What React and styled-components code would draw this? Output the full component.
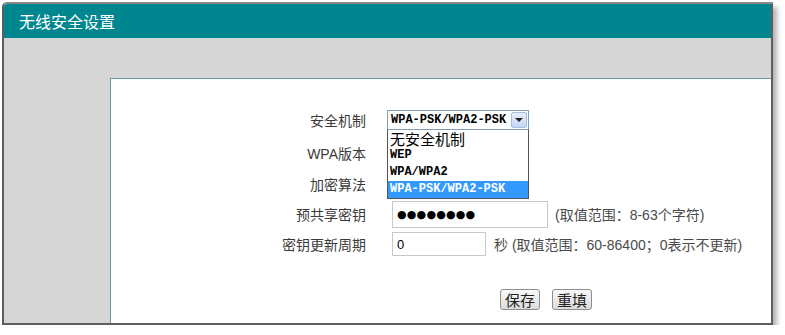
import React from "react";
import styled, { createGlobalStyle } from "styled-components";

const GlobalStyle = createGlobalStyle`
    body {
        margin: 0;
        background: #ffffff;
        font-family: "Liberation Sans", "Noto Sans CJK SC", sans-serif;
    }
`;

const Frame = styled.div`
    margin: 2px 0 0 2px;
    width: 767px;
    height: 319px;
    border: 2px solid #5e5e5e;
    border-top-color: #8a8a8a;
    border-top-left-radius: 5px;
    box-shadow: 4px 5px 5px rgba(0, 0, 0, 0.3);
    display: flex;
    flex-direction: column;
    overflow: hidden;
`;

const Header = styled.div`
    height: 34px;
    flex: none;
    background: #00868f;
    color: #ffffff;
    font-size: 16px;
    display: flex;
    align-items: center;
    padding-left: 15px;
`;

const Body = styled.div`
    flex: 1;
    display: flex;
    background: #d6d6d6;
    padding: 40px 0 0 106px;
`;

const Panel = styled.div`
    flex: 1;
    background: #ffffff;
    border-top: 1px solid #5f9ea2;
    border-left: 1px solid #5f9ea2;
    padding-top: 24px;
`;

const Row = styled.div`
    display: flex;
    align-items: center;
    height: ${(p) => p.h}px;
`;

const Label = styled.div`
    width: 255px;
    flex: none;
    text-align: right;
    font-size: 14px;
    color: #3a3a3a;
`;

const Field = styled.div`
    position: relative;
    display: flex;
    align-items: center;
    margin-left: ${(p) => p.offset || 21}px;
    font-size: 14px;
    color: #4a4a4a;
`;

const Select = styled.div`
    width: 140px;
    height: 18px;
    border: 1px solid #7f9db9;
    display: flex;
    align-items: center;
    font-family: "Liberation Mono", monospace;
    font-weight: bold;
    font-size: 12px;
    color: #000000;
    background: #ffffff;
`;

const SelectText = styled.span`
    flex: 1;
    padding-left: 3px;
`;

const Arrow = styled.span`
    width: 16px;
    height: 16px;
    margin-right: 1px;
    border: 1px solid #a7bede;
    border-radius: 2px;
    background: linear-gradient(#e6eefc, #c5d5f5);
    box-sizing: border-box;
    display: flex;
    align-items: center;
    justify-content: center;

    &::after {
        content: "";
        border-left: 4px solid transparent;
        border-right: 4px solid transparent;
        border-top: 4px solid #222;
    }
`;

const OptionList = styled.div`
    position: absolute;
    top: 19px;
    left: 0;
    width: 140px;
    border: 1px solid #555555;
    border-top-color: #7f9db9;
    background: #ffffff;
    z-index: 2;
`;

const Option = styled.div`
    height: 17px;
    line-height: 17px;
    padding-left: 2px;
    font-family: ${(p) => (p.cjk ? `"Noto Sans CJK SC", sans-serif` : `"Liberation Mono", monospace`)};
    font-weight: ${(p) => (p.cjk ? "normal" : "bold")};
    font-size: ${(p) => (p.cjk ? "15px" : "12px")};
    color: ${(p) => (p.selected ? "#ffffff" : "#000000")};
    background: ${(p) => (p.selected ? "#3399ff" : "transparent")};
`;

const Input = styled.div`
    width: ${(p) => p.w}px;
    height: ${(p) => p.h}px;
    border: 1px solid #c8c8c8;
    box-sizing: border-box;
    display: flex;
    align-items: center;
    padding-left: 4px;
    font-size: 13px;
    color: #000000;
`;

const Dots = styled.span`
    font-family: "DejaVu Sans", sans-serif;
    font-size: 11px;
    letter-spacing: 0.2px;
`;

const Hint = styled.span`
    margin-left: ${(p) => p.gap}px;
    white-space: nowrap;
`;

const Buttons = styled.div`
    display: flex;
    gap: 12px;
    padding: 30px 0 0 389px;
`;

const Button = styled.button`
    height: 21px;
    padding: 0 4px;
    font-family: "Noto Sans CJK SC", sans-serif;
    font-size: 15px;
    color: #222;
    border: 1px solid #8e8e8e;
    border-radius: 3px;
    background: linear-gradient(#f8f8f8, #dcdcdc);
    line-height: 17px;
`;

const options = ["无安全机制", "WEP", "WPA/WPA2", "WPA-PSK/WPA2-PSK"];

export default function App() {
    return (
        <>
            <GlobalStyle />
            <Frame>
                <Header>无线安全设置</Header>
                <Body>
                    <Panel>
                        <Row h={34}>
                            <Label>安全机制</Label>
                            <Field>
                                <Select>
                                    <SelectText>WPA-PSK/WPA2-PSK</SelectText>
                                    <Arrow />
                                </Select>
                                <OptionList>
                                    {options.map((o, i) => (
                                        <Option key={o} cjk={i === 0} selected={i === 3}>{o}</Option>
                                    ))}
                                </OptionList>
                            </Field>
                        </Row>
                        <Row h={32}>
                            <Label>WPA版本</Label>
                        </Row>
                        <Row h={30}>
                            <Label>加密算法</Label>
                        </Row>
                        <Row h={30}>
                            <Label>预共享密钥</Label>
                            <Field offset={26}>
                                <Input w={156} h={27}><Dots>●●●●●●●●</Dots></Input>
                                <Hint gap={7}>(取值范围：8-63个字符)</Hint>
                            </Field>
                        </Row>
                        <Row h={30}>
                            <Label>密钥更新周期</Label>
                            <Field offset={26}>
                                <Input w={94} h={24}>0</Input>
                                <Hint gap={8}>秒 (取值范围：60-86400；0表示不更新)</Hint>
                            </Field>
                        </Row>
                        <Buttons>
                            <Button>保存</Button>
                            <Button>重填</Button>
                        </Buttons>
                    </Panel>
                </Body>
            </Frame>
        </>
    );
}
